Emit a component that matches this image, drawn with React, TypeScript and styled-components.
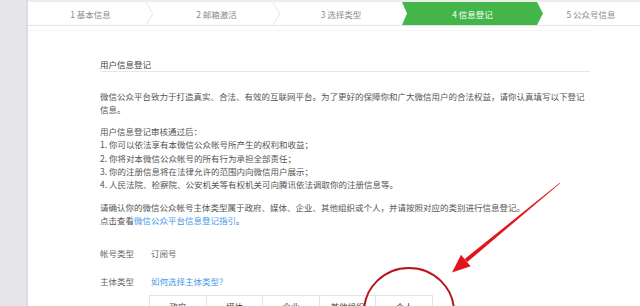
import React from "react";
import styled, { createGlobalStyle, css } from "styled-components";

const Global = createGlobalStyle`
  html, body { margin: 0; padding: 0; background: #fff; }
  body { font-family: "Noto Sans CJK SC", "Noto Sans", sans-serif; }
`;

const Page = styled.div`
  position: relative;
  display: flex;
  width: 640px;
  height: 306px;
  overflow: hidden;
  background: #fff;
`;

const Sidebar = styled.div`
  width: 26px;
  flex: none;
  background: #e6e6ea;
  border-right: 2px solid #dcdce0;
`;

const Main = styled.div`
  flex: 1;
  display: flex;
  flex-direction: column;
  border-top: 2px solid #ededed;
  min-width: 0;
`;

const StepBar = styled.div`
  flex: none;
  display: grid;
  grid-template-columns: 125px 127px 122px 140px 1fr;
  height: 23px;
  border-bottom: 1px solid #e4e4e6;
`;

const Step = styled.div<{ $active?: boolean; $sep?: boolean }>`
  position: relative;
  display: flex;
  align-items: center;
  justify-content: center;
  font-size: 8.5px;
  color: #8c8c8c;
  white-space: nowrap;
  ${(p) =>
    p.$sep &&
    css`
      &::before,
      &::after {
        content: "";
        position: absolute;
        right: 0;
        width: 7px;
        height: 11.5px;
        border-right: 1px solid #e6e6e9;
      }
      &::before {
        top: 0;
        transform-origin: bottom right;
        transform: skewX(30deg);
      }
      &::after {
        bottom: 0;
        transform-origin: top right;
        transform: skewX(-30deg);
      }
    `}
  ${(p) =>
    p.$active &&
    css`
      color: #fff;
      background: #44b549;
      margin-right: -1px;
      clip-path: polygon(0 0, calc(100% - 6px) 0, 100% 50%, calc(100% - 6px) 100%, 0 100%, 5px 50%);
    `}
`;

const Content = styled.div`
  flex: none;
  margin-top: 4px;
  border-top: 1px solid #f5f5f5;
  padding: 26px 0 0 72px;
  width: 490px;
  color: #555;
  font-size: 8.5px;
`;

const Title = styled.div`
  font-size: 8.5px;
  line-height: 14px;
  color: #444;
  border-bottom: 1px solid #e7e7eb;
`;

const Para = styled.p<{ $mt: number }>`
  margin: ${(p) => p.$mt}px 0 0;
  line-height: 13.4px;
  white-space: nowrap;
`;

const Link = styled.a`
  color: #459ae9;
  text-decoration: none;
`;

const FormRow = styled.div<{ $mt: number }>`
  display: flex;
  margin-top: ${(p) => p.$mt}px;
  line-height: 14px;
`;

const Label = styled.div`
  width: 51px;
  flex: none;
  color: #666;
`;

const Value = styled.div`
  color: #666;
`;

const TypeGroup = styled.div`
  display: flex;
  margin: 7px 0 0 50px;
`;

const TypeButton = styled.div`
  flex: none;
  width: 57.6px;
  height: 26px;
  padding-top: 4px;
  box-sizing: border-box;
  border: 1px solid #e2e2e5;
  margin-left: -1px;
  display: flex;
  justify-content: center;
  line-height: 12px;
  color: #444;
  font-size: 8.5px;
  background: #fff;
`;

const Overlay = styled.svg`
  position: absolute;
  left: 0;
  top: 0;
  pointer-events: none;
`;

const steps = ["1 基本信息", "2 邮箱激活", "3 选择类型", "4 信息登记", "5 公众号信息"];
const types = ["政府", "媒体", "企业", "其他组织", "个人"];

export default function App() {
  return (
    <>
      <Global />
      <Page>
        <Sidebar />
        <Main>
          <StepBar>
            {steps.map((s, i) => (
              <Step key={s} $active={i === 3} $sep={i < 2}>
                {s}
              </Step>
            ))}
          </StepBar>
          <Content>
            <Title>用户信息登记</Title>
            <Para $mt={18}>
              微信公众平台致力于打造真实、合法、有效的互联网平台。为了更好的保障你和广大微信用户的合法权益，请你认真填写以下登记
              <br />
              信息。
            </Para>
            <Para $mt={8}>
              用户信息登记审核通过后：
              <br />
              1. 你可以依法享有本微信公众帐号所产生的权利和收益；
              <br />
              2. 你将对本微信公众帐号的所有行为承担全部责任；
              <br />
              3. 你的注册信息将在法律允许的范围内向微信用户展示；
              <br />
              4. 人民法院、检察院、公安机关等有权机关可向腾讯依法调取你的注册信息等。
            </Para>
            <Para $mt={9}>
              请确认你的微信公众帐号主体类型属于政府、媒体、企业、其他组织或个人，并请按照对应的类别进行信息登记。
              <br />
              点击查看<Link>微信公众平台信息登记指引</Link>。
            </Para>
            <FormRow $mt={18}>
              <Label>帐号类型</Label>
              <Value>订阅号</Value>
            </FormRow>
            <FormRow $mt={14}>
              <Label>主体类型</Label>
              <Link>如何选择主体类型？</Link>
            </FormRow>
            <TypeGroup>
              {types.map((t) => (
                <TypeButton key={t}>{t}</TypeButton>
              ))}
            </TypeGroup>
          </Content>
        </Main>
        <Overlay width="640" height="306" viewBox="0 0 640 306">
          <ellipse cx="409" cy="312" rx="45" ry="44" fill="none" stroke="#b8141c" strokeWidth="2" />
          <polygon points="560.2,183.2 559.8,182.8 464.7,258.9 467.3,262.1" fill="#e3151c" />
          <polygon points="452,272.5 461,254.8 470.6,266.3" fill="#e3151c" />
        </Overlay>
      </Page>
    </>
  );
}
